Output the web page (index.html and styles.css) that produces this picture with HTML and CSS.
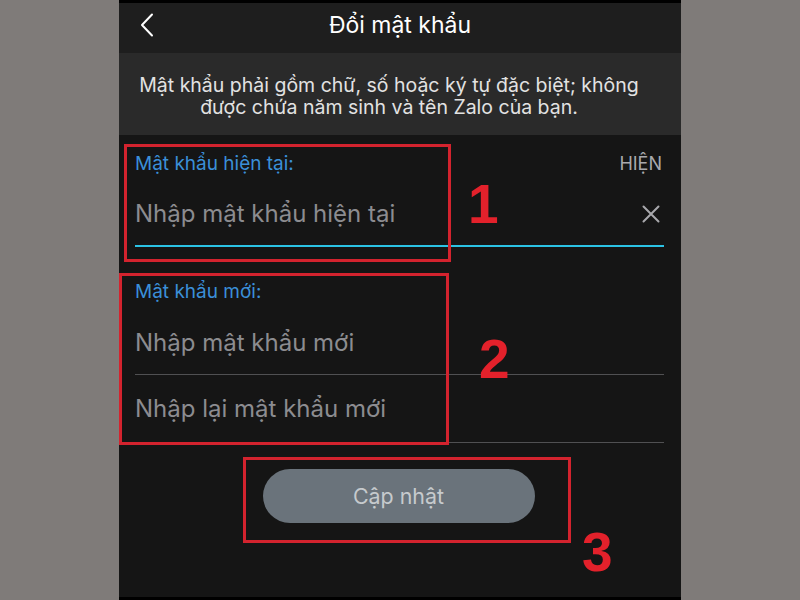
FILE: index.html
```html
<!DOCTYPE html>
<html lang="vi">
<head>
<meta charset="utf-8">
<title>Đổi mật khẩu</title>
<link rel="stylesheet" href="styles.css">
</head>
<body>
<div class="page">
  <div class="phone">
    <header class="header">
      <span class="back">
        <svg width="14" height="24" viewBox="0 0 14 24"><path d="M12 1.5 L2 12 L12 22.5" fill="none" stroke="#ffffff" stroke-width="2" stroke-linecap="round" stroke-linejoin="round"/></svg>
      </span>
      <h1 class="title">Đổi mật khẩu</h1>
    </header>
    <div class="info">
      <p>Mật khẩu phải gồm chữ, số hoặc ký tự đặc biệt; không<br>được chứa năm sinh và tên Zalo của bạn.</p>
    </div>
    <form class="form">
      <div class="field field-current">
        <div class="label-row">
          <span class="label">Mật khẩu hiện tại:</span>
          <span class="show">HIỆN</span>
        </div>
        <div class="input-row input-active">
          <span class="placeholder">Nhập mật khẩu hiện tại</span>
          <svg class="clear" width="18" height="18" viewBox="0 0 18 18"><path d="M1.5 1.5 L16.5 16.5 M16.5 1.5 L1.5 16.5" stroke="#a8a8ac" stroke-width="2" stroke-linecap="round"/></svg>
        </div>
      </div>
      <div class="field field-new">
        <div class="label-row">
          <span class="label">Mật khẩu mới:</span>
        </div>
        <div class="input-row input-first">
          <span class="placeholder">Nhập mật khẩu mới</span>
        </div>
        <div class="input-row input-second">
          <span class="placeholder">Nhập lại mật khẩu mới</span>
        </div>
      </div>
      <div class="actions">
        <button type="button" class="submit">Cập nhật</button>
      </div>
    </form>

    <div class="mark mark-1"></div>
    <div class="mark mark-2"></div>
    <div class="mark mark-3"></div>
    <span class="num num-1">1</span>
    <span class="num num-2">2</span>
    <span class="num num-3">3</span>
  </div>
</div>
</body>
</html>
```

FILE: styles.css
```css
html, body {
  margin: 0;
  padding: 0;
  background: #7f7b79;
}

.page {
  display: flex;
  justify-content: center;
  height: 600px;
}

.phone {
  position: relative;
  width: 562px;
  height: 600px;
  box-sizing: border-box;
  background: #151515;
  border-top: 3px solid #000;
  border-bottom: 3px solid #000;
  font-family: Inter, "Liberation Sans", sans-serif;
  overflow: hidden;
}

.header {
  position: relative;
  height: 50px;
  box-sizing: border-box;
  padding-bottom: 6px;
  background: #1e1e1e;
  display: flex;
  align-items: center;
  justify-content: center;
}

.back {
  position: absolute;
  left: 21px;
  top: 10px;
  display: flex;
}

.title {
  margin: 0;
  font-size: 23px;
  font-weight: 400;
  color: #ffffff;
}

.info {
  height: 82px;
  box-sizing: border-box;
  background: #2a2a2a;
  display: flex;
  align-items: center;
  justify-content: center;
  padding: 4px 32px 0 10px;
}

.info p {
  margin: 0;
  text-align: center;
  color: #e2e2e2;
  font-size: 19.5px;
  line-height: 22px;
}

.form {
  margin: 0;
  padding: 0 17px 0 16px;
}

.field-current {
  padding-top: 18px;
}

.field-new {
  padding-top: 34px;
}

.label-row {
  display: flex;
  justify-content: space-between;
  align-items: center;
  height: 22px;
}

.label {
  color: #3b8fd8;
  font-size: 19px;
  line-height: 22px;
}

.show {
  color: #a9a9ad;
  font-size: 18px;
  line-height: 22px;
  margin-right: 2px;
}

.input-row {
  display: flex;
  align-items: center;
  justify-content: space-between;
  box-sizing: border-box;
}

.placeholder {
  color: #8c8c90;
  font-size: 24px;
  line-height: 28px;
}

.input-active {
  height: 72px;
  padding-top: 8px;
  border-bottom: 2px solid #2bc2e4;
}

.clear {
  margin-right: 4px;
}

.input-first {
  height: 72px;
  padding-top: 8px;
  border-bottom: 1px solid #505052;
}

.input-second {
  height: 68px;
  border-bottom: 1px solid #505052;
}

.actions {
  display: flex;
  justify-content: center;
  padding-top: 26px;
  padding-right: 2px;
}

.submit {
  width: 272px;
  height: 54px;
  border: none;
  border-radius: 27px;
  background: #6a737b;
  color: #c6cacd;
  font-family: Inter, "Liberation Sans", sans-serif;
  font-size: 21.4px;
}

.mark {
  position: absolute;
  border: 3px solid #d3232e;
  box-sizing: border-box;
}

.mark-1 { left: 5px;   top: 141px; width: 327px; height: 118px; }
.mark-2 { left: 0;     top: 270px; width: 330px; height: 172px; }
.mark-3 { left: 124px; top: 454px; width: 328px; height: 86px; }

.num {
  position: absolute;
  font-family: "Liberation Sans", Arial, sans-serif;
  font-weight: 700;
  font-size: 55px;
  line-height: 55px;
  color: #e3212b;
}

.num-1 { left: 349px; top: 174px; }
.num-2 { left: 360px; top: 329px; }
.num-3 { left: 463px; top: 522px; }
```
